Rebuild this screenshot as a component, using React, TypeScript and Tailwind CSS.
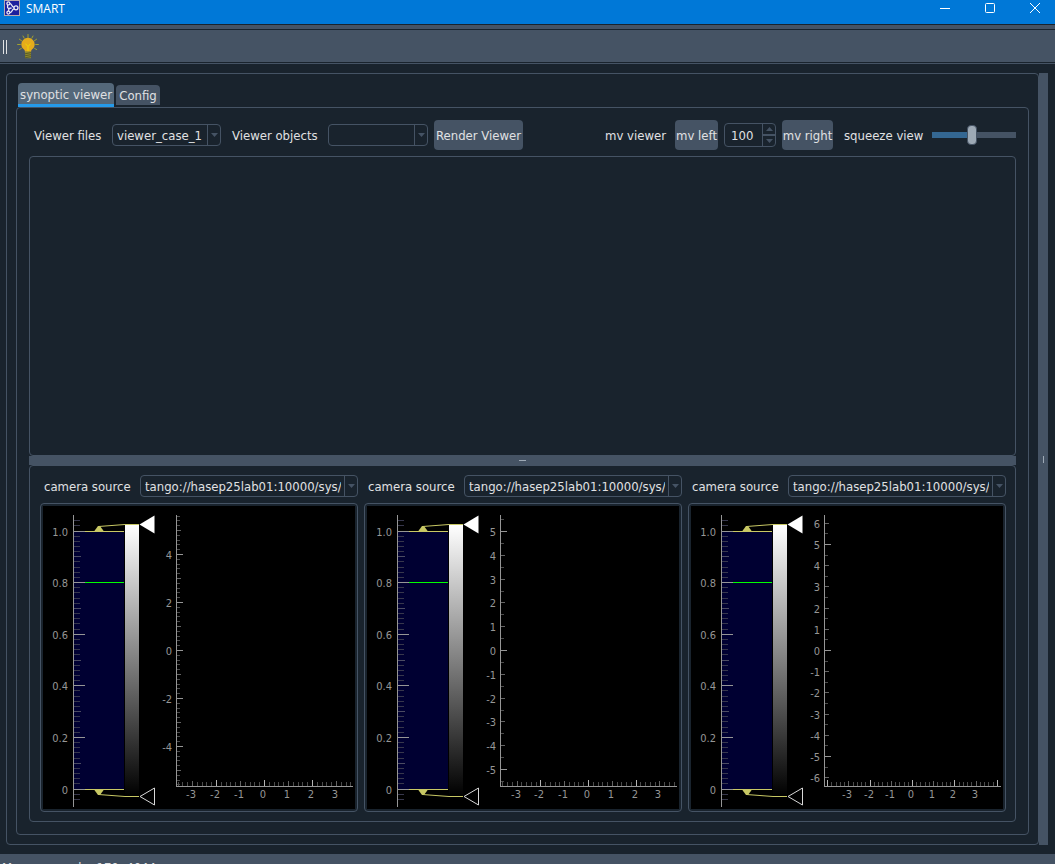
import { useState } from "react";
import type { ReactNode } from "react";

const SELECT_FONT = "text-[13px] leading-[18px] text-[#e0e1e3]";

function AppIcon() {
  return (
    <svg width="16" height="16" viewBox="0 0 16 16" aria-hidden="true">
      <rect x="0.5" y="0.5" width="15" height="15" fill="#1c1f9e" stroke="#b9a9b0" />
      <g fill="none" stroke="#e9eaf6" strokeWidth="1.3">
        <circle cx="4.400" cy="3.400" r="1.500" />
        <circle cx="12" cy="7.800" r="2" />
        <circle cx="4.400" cy="12.600" r="1.500" />
        <path d="M3.600 5v2.600L5 9l-.6 2M5 8.400l2.600-.4M6 3.600c2 0 1 3 4 3.800M6 12.600c2.200 0 1.600-3 4-3.800" />
      </g>
    </svg>
  );
}

function BulbIcon() {
  return (
    <svg width="22" height="26" viewBox="0 0 22 26" aria-hidden="true">
      <g stroke="#a3a22c" strokeWidth="1" strokeLinecap="round">
        <path d="M11 0.5v3M6 2l1.2 2.2M16 2l-1.2 2.2M2.4 5.2l2.2 1.6M19.6 5.2l-2.2 1.6M0.6 10.5h2.8M18.6 10.5h2.8M2.4 15.6l2-1.2M19.6 15.6l-2-1.2" />
      </g>
      <path
        d="M11 3.8a6.7 6.7 0 0 1 6.7 6.6c0 2.8-1.7 4-2.8 5.2-.6.7-.8 1.4-.8 2.2H7.9c0-.8-.2-1.5-.8-2.2-1.1-1.2-2.8-2.4-2.8-5.2A6.7 6.7 0 0 1 11 3.8Z"
        fill="#e5ac1c"
      />
      <path d="M8.400 9.600 11 12.600l2.600-3M11 12.600v4.800" fill="none" stroke="#f0d800" strokeWidth="1" />
      <rect x="8" y="17.6" width="6" height="6.6" fill="#8f8a2c" />
      <path d="M8 19.800l6-1.200M8 21.800l6-1.200M8 23.800l6-1.200" stroke="#4d4f2a" strokeWidth="0.8" />
    </svg>
  );
}

function Triangle({ up = false }: { up?: boolean }) {
  return (
    <svg width="7" height="4" viewBox="0 0 7 4" aria-hidden="true">
      <path d={up ? "M0 4 3.5 0 7 4Z" : "M0 0 3.5 4 7 0Z"} fill="#455364" />
    </svg>
  );
}

function Combo({ id, options, className }: { id: string; options: string[]; className: string }) {
  return (
    <div className={`relative h-[22px] rounded-[4px] border border-[#455364] ${className}`}>
      <select
        id={id}
        className={`block h-full w-full appearance-none overflow-hidden bg-transparent pt-0.5 pr-4 pl-1 outline-none ${SELECT_FONT}`}
      >
        {options.map((o) => (
          <option key={o} className="bg-[#19232d]">
            {o}
          </option>
        ))}
      </select>
      <span className="pointer-events-none absolute inset-y-0 right-0 flex w-[13px] items-center justify-center border-l border-[#455364]">
        <Triangle />
      </span>
    </div>
  );
}

function PushButton({ children, className }: { children: ReactNode; className: string }) {
  return (
    <button
      type="button"
      className={`flex h-[30px] shrink-0 items-center justify-center rounded-[4px] bg-[#455364] pt-0.5 whitespace-nowrap ${className}`}
    >
      {children}
    </button>
  );
}

interface AxisSpec {
  unit: number;
  yMax: number;
  minor: number;
  yLabelStep: number;
  yMajor: number;
  xMajor: number;
  xMinor: number;
}

function steps(limit: number, step: number): number[] {
  const n = Math.floor(limit / step);
  return Array.from({ length: 2 * n + 1 }, (_, i) => (i - n) * step);
}

const isMultiple = (v: number, m: number) => Math.abs(v / m - Math.round(v / m)) < 0.001;

const HIST_TOP = 25;
const HIST_BOTTOM = 283;
const Y_ZERO = 144;
const X_ZERO = 221;

function CameraPlot({ id, spec }: { id: string; spec: AxisSpec }) {
  const hist = Array.from({ length: 55 }, (_, i) => i - 2);
  const histY = (v: number) => Math.floor(HIST_BOTTOM - (HIST_BOTTOM - HIST_TOP) * v);
  const labels = steps(spec.yMax, spec.yLabelStep);
  return (
    <svg className="block h-[303px] w-full bg-black" fontSize="11" fill="#969696">
      <defs>
        <linearGradient id={`${id}-ramp`} x1="0" y1="0" x2="0" y2="1">
          <stop offset="0" stopColor="#fff" />
          <stop offset="1" stopColor="#000" />
        </linearGradient>
      </defs>

      <rect x="30" y={HIST_TOP} width="51" height={HIST_BOTTOM - HIST_TOP} fill="#000032" />
      <rect x="82" y="19" width="14" height="271" fill={`url(#${id}-ramp)`} />

      <g shapeRendering="crispEdges">
        {hist.map((i) => {
          const major = i % 10 === 0;
          const mid = i % 5 === 0;
          return (
            <rect
              key={i}
              x="31"
              y={histY(i / 50)}
              width={major ? 11 : mid ? 7 : 6}
              height="1"
              fill={major ? "#969696" : mid ? "#4c4c62" : "#37374c"}
            />
          );
        })}
        <rect x="30" y="9" width="1" height="292" fill="#969696" />
        <rect x="42" y={HIST_TOP} width="39" height="1" fill="#c8c864" />
        <rect x="42" y={HIST_BOTTOM} width="39" height="1" fill="#c8c864" />
        <rect x="42" y="76" width="39" height="1" fill="#00ff00" />
      </g>
      {["0", "0.2", "0.4", "0.6", "0.8", "1.0"].map((t) => (
        <text key={t} x="25" y={histY(Number(t)) + 5} textAnchor="end">
          {t}
        </text>
      ))}

      <path d="M51 25.500h10l-4-5.500h-2Z" fill="#c8c864" />
      <path d="M55.500 20.500 82 18.500h14" fill="none" stroke="#c8c864" />
      <path d="M96.500 18.500 111.500 9.500v18Z" fill="#fff" />
      <path d="M51 283.500h10l-4 5.500h-2Z" fill="#c8c864" />
      <path d="M55.500 288.500 82 290.500h14" fill="none" stroke="#c8c864" />
      <path d="M97 290.500 111.500 282v17Z" fill="none" stroke="#d8d8d8" />

      <g shapeRendering="crispEdges">
        {steps(135 / spec.unit, spec.minor).map((v) => {
          const major = isMultiple(v, spec.yMajor);
          const mid = isMultiple(v, 1);
          return (
            <rect
              key={v}
              x="134"
              y={Math.round(Y_ZERO - v * spec.unit)}
              width={major ? 6 : mid ? 4 : 3}
              height="1"
              fill={major ? "#969696" : mid ? "#646464" : "#4b4b4b"}
            />
          );
        })}
        {steps(87 / spec.unit, spec.xMinor).map((v) => {
          const len = isMultiple(v, spec.xMajor) ? 6 : isMultiple(v, 1) ? 5 : 4;
          return (
            <rect
              key={v}
              x={Math.round(X_ZERO + v * spec.unit)}
              y={280 - len}
              width="1"
              height={len}
              fill={len === 6 ? "#b4b4b4" : len === 5 ? "#646464" : "#4b4b4b"}
            />
          );
        })}
        <rect x="133" y="9" width="1" height="272" fill="#969696" />
        <rect x="133" y="280" width="177" height="1" fill="#969696" />
      </g>
      {labels.map((v) => (
        <text key={v} x="129" y={Math.round(Y_ZERO - v * spec.unit) + 5} textAnchor="end">
          {v}
        </text>
      ))}
      {[-3, -2, -1, 0, 1, 2, 3].map((v) => (
        <text key={v} x={Math.round(X_ZERO + v * spec.unit) - 1} y="292" textAnchor="middle">
          {v}
        </text>
      ))}
    </svg>
  );
}

const CAMERAS: AxisSpec[] = [
  { unit: 24, yMax: 4, minor: 0.2, yLabelStep: 2, yMajor: 2, xMajor: 2, xMinor: 0.2 },
  { unit: 23.8, yMax: 5, minor: 0.5, yLabelStep: 1, yMajor: 5, xMajor: 2, xMinor: 0.2 },
  { unit: 21.2, yMax: 6, minor: 0.5, yLabelStep: 1, yMajor: 5, xMajor: 2, xMinor: 0.2 },
];

function CameraPanel({ index, spec }: { index: number; spec: AxisSpec }) {
  const id = `camera-${index}`;
  return (
    <section className="flex min-w-0 flex-col gap-1.5">
      <div className="flex items-center gap-1.5">
        <label htmlFor={id} className="w-[94px] shrink-0 pt-0.5 pl-1 whitespace-nowrap">
          camera source
        </label>
        <Combo id={id} options={["tango://hasep25lab01:10000/sys/tg_test/1"]} className="min-w-0 flex-1" />
      </div>
      <div className="rounded-[4px] border border-[#455364] p-0.5">
        <CameraPlot id={id} spec={spec} />
      </div>
    </section>
  );
}

function SpinBox() {
  const [value, setValue] = useState(100);
  return (
    <div className="flex h-6 w-[52px] shrink-0 overflow-hidden rounded-[4px] border border-[#455364]">
      <input
        aria-label="mv viewer step"
        className="w-[37px] bg-transparent pt-0.5 pl-1.5 outline-none"
        value={value}
        onChange={(e) => setValue(Number(e.target.value) || 0)}
      />
      <div className="flex flex-1 flex-col border-l border-[#455364]">
        <button
          type="button"
          aria-label="Increase"
          className="flex flex-1 items-center justify-center border-b border-[#455364]"
          onClick={() => setValue(value + 1)}
        >
          <Triangle up />
        </button>
        <button
          type="button"
          aria-label="Decrease"
          className="flex flex-1 items-center justify-center border-t border-[#455364]"
          onClick={() => setValue(value - 1)}
        >
          <Triangle />
        </button>
      </div>
    </div>
  );
}

function TitleBar() {
  return (
    <header className="flex h-6 shrink-0 items-start overflow-hidden bg-[#0078d7] pl-1 text-white">
      <div className="flex h-4 items-center gap-1.5">
        <AppIcon />
        <h1 className="pt-0.5 font-['Open_Sans',sans-serif] text-[12px] leading-4">SMART</h1>
      </div>
      <div className="-mr-0.5 ml-auto flex h-4">
        <button type="button" aria-label="Minimize" className="flex w-[45px] items-center justify-center">
          <svg width="10" height="10" viewBox="0 0 10 10" stroke="currentColor">
            <path d="M0 5.500h10" />
          </svg>
        </button>
        <button type="button" aria-label="Maximize" className="flex w-[45px] items-center justify-center">
          <svg width="10" height="10" viewBox="0 0 10 10" fill="none" stroke="currentColor">
            <rect x="0.5" y="0.5" width="9" height="9" rx="1" />
          </svg>
        </button>
        <button type="button" aria-label="Close" className="flex w-[45px] items-center justify-center">
          <svg width="10" height="10" viewBox="0 0 10 10" stroke="currentColor">
            <path d="M0 0 10 10M10 0 0 10" />
          </svg>
        </button>
      </div>
    </header>
  );
}

export default function App() {
  return (
    <div className="flex h-screen flex-col overflow-hidden bg-[#19232d] font-['DejaVu_Sans_Condensed','Noto_Sans',sans-serif] text-[13px] leading-[20px] text-[#e0e1e3]">
      <TitleBar />
      <div className="mt-px h-1 shrink-0 bg-[#455364]" />
      <div className="mt-px flex h-8 shrink-0 items-center gap-2.5 bg-[#455364] pt-0.5 pl-[3px]" role="toolbar">
        <span className="h-[14px] w-1 border-x border-[#e0e1e3]" />
        <button type="button" aria-label="Hints">
          <BulbIcon />
        </button>
      </div>
      <div className="mt-px h-px shrink-0 bg-[#455364]" />

      <main className="flex min-h-0 flex-1 py-[9px] pr-[7px] pl-[6px]">
        <div className="flex min-w-0 flex-1 flex-col rounded-[4px] border border-[#455364] p-[9px]">
          <div role="tablist" className="flex h-6 shrink-0 gap-0.5 pl-0.5">
            <button
              type="button"
              role="tab"
              aria-selected="true"
              className="flex h-6 w-24 items-center justify-center rounded-t-[4px] border-b-[3px] border-[#259ae9] bg-[#54687a] pt-0.5 whitespace-nowrap"
            >
              synoptic viewer
            </button>
            <button
              type="button"
              role="tab"
              aria-selected="false"
              className="mt-0.5 flex h-5 w-11 items-center justify-center rounded-t-[4px] bg-[#455364] pt-0.5"
            >
              Config
            </button>
          </div>

          <div className="flex min-h-0 flex-1 flex-col rounded-[4px] border border-[#455364] p-3">
            <div className="mb-1.5 flex shrink-0 items-center gap-1.5">
              <label htmlFor="viewer-files" className="w-[77px] shrink-0 pt-0.5 pl-[5px] whitespace-nowrap">
                Viewer files
              </label>
              <Combo id="viewer-files" options={["viewer_case_1"]} className="w-[109px] shrink-0" />
              <label htmlFor="viewer-objects" className="w-[95px] shrink-0 pt-0.5 pl-[5px] whitespace-nowrap">
                Viewer objects
              </label>
              <Combo id="viewer-objects" options={[""]} className="w-[100px] shrink-0" />
              <PushButton className="w-[89px]">Render Viewer</PushButton>
              <span className="ml-auto w-[69px] shrink-0 pt-0.5 pl-[5px] whitespace-nowrap">mv viewer</span>
              <PushButton className="w-[43px]">mv left</PushButton>
              <SpinBox />
              <PushButton className="w-[51px]">mv right</PushButton>
              <label htmlFor="squeeze" className="w-[87px] shrink-0 pt-0.5 pl-[5px] whitespace-nowrap">
                squeeze view
              </label>
              <input
                id="squeeze"
                type="range"
                min={0}
                max={100}
                defaultValue={47}
                className="h-5 w-[84px] shrink-0 appearance-none bg-transparent [&::-webkit-slider-runnable-track]:h-1.5 [&::-webkit-slider-runnable-track]:bg-[linear-gradient(to_right,#346792_47%,#455364_47%)] [&::-webkit-slider-thumb]:mt-[-7px] [&::-webkit-slider-thumb]:h-5 [&::-webkit-slider-thumb]:w-2.5 [&::-webkit-slider-thumb]:appearance-none [&::-webkit-slider-thumb]:rounded-[4px] [&::-webkit-slider-thumb]:border [&::-webkit-slider-thumb]:border-[#455364] [&::-webkit-slider-thumb]:bg-[#9da9b5]"
              />
            </div>

            <div className="min-h-0 flex-1 rounded-[4px] border border-[#455364]" />
            <div className="flex h-[9px] shrink-0 items-center justify-center bg-[#455364]">
              <span className="h-px w-[7px] bg-[#9da9b5]" />
            </div>
            <div className="grid shrink-0 grid-cols-3 gap-1.5 rounded-[4px] border border-[#455364] py-[9px] pr-[9px] pl-[10px]">
              {CAMERAS.map((spec, i) => (
                <CameraPanel key={i} index={i} spec={spec} />
              ))}
            </div>
          </div>
        </div>
        <div className="flex w-[9px] shrink-0 items-center justify-center bg-[#455364]">
          <span className="h-[7px] w-px bg-[#9da9b5]" />
        </div>
      </main>

      <footer className="h-2.5 shrink-0 overflow-hidden bg-[#455364] pt-1 pl-0.5 whitespace-pre">
        {"Memory used:   170, 4044"}
      </footer>
    </div>
  );
}
